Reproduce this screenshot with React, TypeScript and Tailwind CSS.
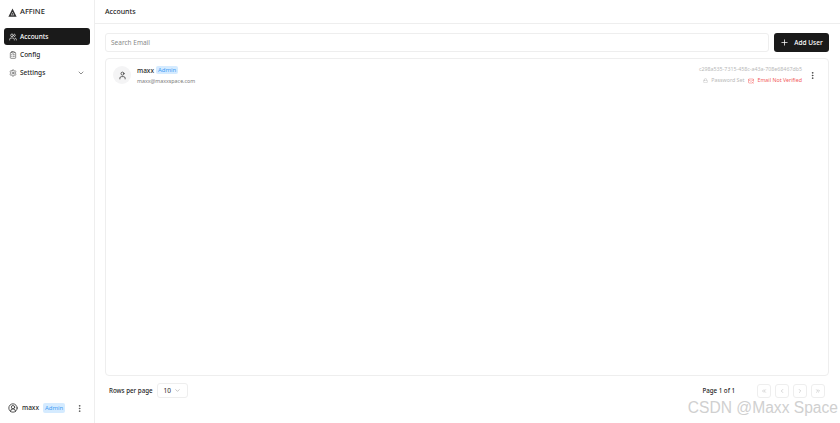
import { ChevronDown, ChevronLeft, ChevronRight, ChevronsLeft, ChevronsRight, CircleUserRound, ClipboardList, EllipsisVertical, Lock, MailX, Plus, Settings, User, Users } from "lucide-react";

export default function App() {
  return (
    <div className="relative flex h-[423px] w-[840px] overflow-hidden bg-white font-['Noto_Sans',sans-serif] text-[#262626]">
      {/* Sidebar */}
      <aside className="flex w-[95px] shrink-0 flex-col border-r border-[#eeeeee] pl-[4px] pr-[4px]">
        <div className="flex h-[24px] items-center gap-[3px] pl-[4px]">
          <svg width="9" height="9" viewBox="0 0 24 24" fill="#333333">
            <path d="M12 1 L23 23 H1 Z M12 10 L7.5 19 H16.5 Z" fillRule="evenodd" />
            <path d="M12 12 L15 18 H9 Z" />
          </svg>
          <span className="text-[7.5px] font-medium">AFFiNE</span>
        </div>
        <nav className="mt-[4px] flex flex-col">
          <div className="flex h-[17px] items-center gap-[3px] rounded-[3px] bg-[#1a1a1a] pl-[5px] text-white">
            <Users size={8} />
            <span className="text-[6.5px] font-medium">Accounts</span>
          </div>
          <div className="mt-[1px] flex h-[18px] items-center gap-[3px] pl-[5px]">
            <ClipboardList size={8} className="text-[#555555]" />
            <span className="text-[6.5px] font-medium">Config</span>
          </div>
          <div className="flex h-[18px] items-center gap-[3px] pl-[5px] pr-[5px]">
            <Settings size={8} className="text-[#555555]" />
            <span className="text-[6.5px] font-medium">Settings</span>
            <ChevronDown size={8} className="ml-auto text-[#555555]" />
          </div>
        </nav>
        <div className="mt-auto mb-[7px] flex h-[16px] items-center pl-[4px] pr-[6px]">
          <CircleUserRound size={10} className="text-[#333333]" />
          <span className="ml-[4px] text-[6.5px] font-medium">maxx</span>
          <span className="ml-[4px] rounded-[2px] bg-[#d5ebff] px-[2px] py-[1px] text-[6px] leading-[8px] text-[#3f9cf5]">Admin</span>
          <EllipsisVertical size={9} className="ml-auto text-[#444444]" />
        </div>
      </aside>

      {/* Main */}
      <main className="flex min-w-0 flex-1 flex-col">
        <header className="flex h-[24px] shrink-0 items-center border-b border-[#eeeeee] pl-[10px] pt-[1px] text-[7px] font-medium">
          Accounts
        </header>
        <div className="flex flex-1 flex-col pl-[10px] pr-[11px] pt-[9px]">
          <div className="flex gap-[5px]">
            <div className="flex h-[19px] flex-1 items-center rounded-[3px] border border-[#eeeeee] pl-[5px] text-[6.5px] text-[#8a8a8a]">
              Search Email
            </div>
            <button className="flex h-[19px] w-[55px] items-center justify-center gap-[5px] rounded-[3px] bg-[#1a1a1a] text-[6.5px] font-medium text-white">
              <Plus size={9} />
              Add User
            </button>
          </div>

          <div className="mt-[6px] h-[318px] rounded-[4px] border border-[#eeeeee]">
            <div className="flex h-[32px] items-center pl-[7px] pr-[11px]">
              <div className="flex h-[18px] w-[18px] items-center justify-center rounded-full bg-[#f4f4f5]">
                <User size={9} className="text-[#333333]" />
              </div>
              <div className="ml-[6px] flex flex-col">
                <div className="flex items-center gap-[2px]">
                  <span className="text-[6.5px] font-medium leading-[9px]">maxx</span>
                  <span className="rounded-[2px] bg-[#d5ebff] px-[2px] text-[6px] leading-[8px] text-[#3f9cf5]">Admin</span>
                </div>
                <span className="mt-[3px] text-[5.3px] leading-[7px] text-[#7a7a7a]">maxx@maxxspace.com</span>
              </div>
              <div className="ml-auto flex flex-col items-end">
                <span className="text-[5.3px] leading-[7px] text-[#b8b8b8]">c298a535-7315-458c-a43a-708e68467db5</span>
                <div className="mt-[4px] flex items-center text-[5.3px] leading-[7px]">
                  <Lock size={5} className="text-[#b8b8b8]" />
                  <span className="ml-[3px] text-[#b8b8b8]">Password Set</span>
                  <MailX size={6} className="ml-[4px] text-[#f25c5c]" />
                  <span className="ml-[3px] text-[#f25c5c]">Email Not Verified</span>
                </div>
              </div>
              <EllipsisVertical size={9} className="ml-[6px] text-[#333333]" />
            </div>
          </div>

          <div className="mt-[7px] flex h-[15px] items-center pl-[4px] pr-[4px]">
            <span className="text-[6.2px] font-medium">Rows per page</span>
            <div className="ml-[4px] flex h-[15px] w-[31px] items-center justify-between rounded-[3px] border border-[#eeeeee] pl-[6px] pr-[6px] text-[6.5px]">
              10
              <ChevronDown size={7} className="text-[#999999]" />
            </div>
            <span className="ml-auto text-[6.2px] font-medium">Page 1 of 1</span>
            <div className="ml-[22px] flex gap-[4px] text-[#aaaaaa]">
              <div className="flex h-[14px] w-[14px] items-center justify-center rounded-[3px] border border-[#eeeeee]"><ChevronsLeft size={6} /></div>
              <div className="flex h-[14px] w-[14px] items-center justify-center rounded-[3px] border border-[#eeeeee]"><ChevronLeft size={6} /></div>
              <div className="flex h-[14px] w-[14px] items-center justify-center rounded-[3px] border border-[#eeeeee]"><ChevronRight size={6} /></div>
              <div className="flex h-[14px] w-[14px] items-center justify-center rounded-[3px] border border-[#eeeeee]"><ChevronsRight size={6} /></div>
            </div>
          </div>
        </div>
      </main>

      {/* Watermark */}
      <span className="absolute right-[2px] top-[399px] font-['Liberation_Sans',sans-serif] text-[15.6px] leading-[18px] text-[#d0d0d0]">
        CSDN @Maxx Space
      </span>
    </div>
  );
}
